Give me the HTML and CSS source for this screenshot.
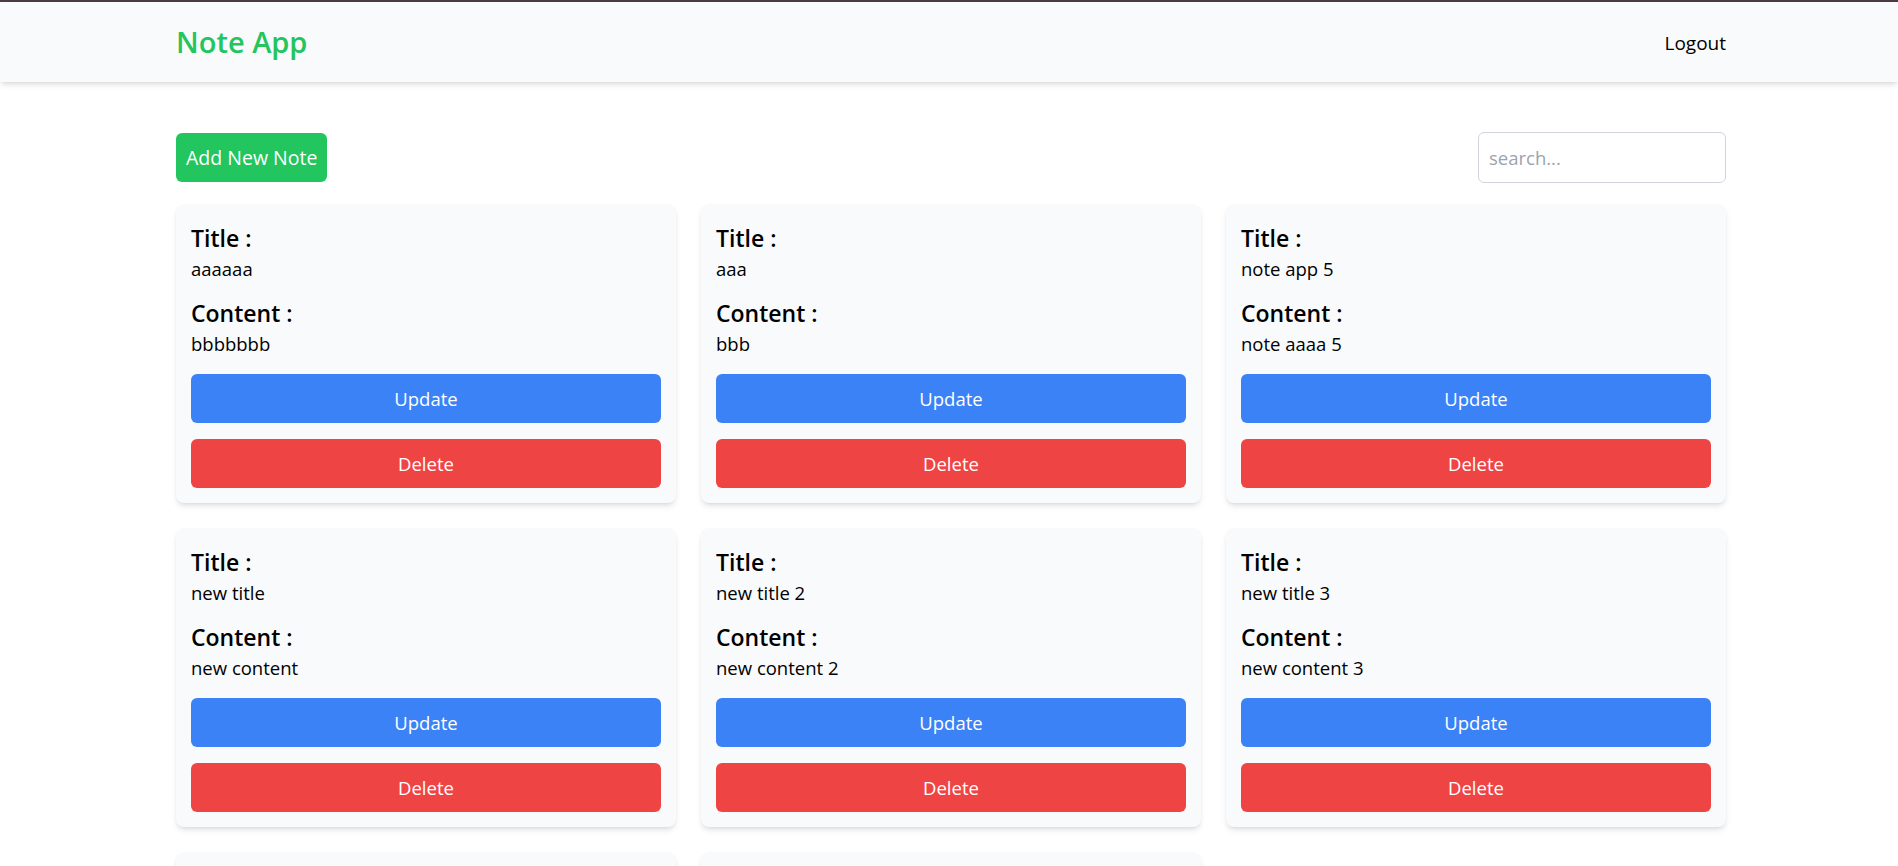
FILE: index.html
```html
<!DOCTYPE html>
<html lang="en">
<head>
<meta charset="utf-8">
<title>Note App</title>
<link rel="stylesheet" href="styles.css">
</head>
<body>
<div class="topline"></div>
<header class="navbar">
  <div class="container nav-inner">
    <div class="brand">Note App</div>
    <a class="logout" href="#">Logout</a>
  </div>
</header>
<main class="container main">
  <div class="toolbar">
    <button class="btn btn-add">Add New Note</button>
    <input class="search" type="text" placeholder="search...">
  </div>
  <div class="grid">
    <div class="card">
      <h3 class="label">Title :</h3>
      <p class="value">aaaaaa</p>
      <h3 class="label label-gap">Content :</h3>
      <p class="value">bbbbbbb</p>
      <div class="actions">
        <button class="btn btn-update">Update</button>
        <button class="btn btn-delete">Delete</button>
      </div>
    </div>
    <div class="card">
      <h3 class="label">Title :</h3>
      <p class="value">aaa</p>
      <h3 class="label label-gap">Content :</h3>
      <p class="value">bbb</p>
      <div class="actions">
        <button class="btn btn-update">Update</button>
        <button class="btn btn-delete">Delete</button>
      </div>
    </div>
    <div class="card">
      <h3 class="label">Title :</h3>
      <p class="value">note app 5</p>
      <h3 class="label label-gap">Content :</h3>
      <p class="value">note aaaa 5</p>
      <div class="actions">
        <button class="btn btn-update">Update</button>
        <button class="btn btn-delete">Delete</button>
      </div>
    </div>
    <div class="card">
      <h3 class="label">Title :</h3>
      <p class="value">new title</p>
      <h3 class="label label-gap">Content :</h3>
      <p class="value">new content</p>
      <div class="actions">
        <button class="btn btn-update">Update</button>
        <button class="btn btn-delete">Delete</button>
      </div>
    </div>
    <div class="card">
      <h3 class="label">Title :</h3>
      <p class="value">new title 2</p>
      <h3 class="label label-gap">Content :</h3>
      <p class="value">new content 2</p>
      <div class="actions">
        <button class="btn btn-update">Update</button>
        <button class="btn btn-delete">Delete</button>
      </div>
    </div>
    <div class="card">
      <h3 class="label">Title :</h3>
      <p class="value">new title 3</p>
      <h3 class="label label-gap">Content :</h3>
      <p class="value">new content 3</p>
      <div class="actions">
        <button class="btn btn-update">Update</button>
        <button class="btn btn-delete">Delete</button>
      </div>
    </div>
    <div class="card">
      <h3 class="label">Title :</h3>
      <p class="value">new title 4</p>
      <h3 class="label label-gap">Content :</h3>
      <p class="value">new content 4</p>
      <div class="actions">
        <button class="btn btn-update">Update</button>
        <button class="btn btn-delete">Delete</button>
      </div>
    </div>
    <div class="card">
      <h3 class="label">Title :</h3>
      <p class="value">new title 5</p>
      <h3 class="label label-gap">Content :</h3>
      <p class="value">new content 5</p>
      <div class="actions">
        <button class="btn btn-update">Update</button>
        <button class="btn btn-delete">Delete</button>
      </div>
    </div>
  </div>
</main>
</body>
</html>
```
FILE: styles.css
```css
* {
  box-sizing: border-box;
}

html, body {
  margin: 0;
  padding: 0;
  background: #ffffff;
  font-family: "Open Sans", "Noto Sans", sans-serif;
  color: #000000;
}

body {
  padding-left: 4px;
}

.topline {
  height: 2px;
  background: #4b3a45;
  margin-left: -4px;
}

.container {
  width: 1550px;
  margin: 0 auto;
}

.navbar {
  background: #f9fafb;
  height: 80px;
  margin-left: -4px;
  padding-left: 4px;
  box-shadow: 0 4px 6px -1px rgba(0, 0, 0, 0.1), 0 2px 4px -2px rgba(0, 0, 0, 0.1);
  position: relative;
  z-index: 1;
}

.nav-inner {
  height: 100%;
  display: flex;
  align-items: center;
  justify-content: space-between;
}

.brand {
  color: #22c55e;
  font-size: 29px;
  font-weight: 600;
  line-height: 38px;
}

.logout {
  color: #000000;
  text-decoration: none;
  font-size: 19px;
  line-height: 28px;
  margin-top: 2px;
}

.main {
  padding-top: 50px;
  padding-bottom: 40px;
}

.toolbar {
  display: flex;
  justify-content: space-between;
  align-items: center;
  height: 51px;
}

.btn {
  border: none;
  border-radius: 6px;
  color: #ffffff;
  font-family: "Open Sans", "Noto Sans", sans-serif;
  font-size: 18.5px;
  height: 49px;
  cursor: pointer;
  white-space: nowrap;
}

.btn-add {
  background: #22c55e;
  padding: 0 10px;
  font-size: 19.5px;
}

.search {
  width: 248px;
  height: 51px;
  border: 1px solid #d1d5db;
  border-radius: 6px;
  padding: 0 10px;
  font-family: "Open Sans", "Noto Sans", sans-serif;
  font-size: 18.5px;
  color: #111827;
  background: #ffffff;
  outline: none;
}

.search::placeholder {
  color: #9ca3af;
}

.grid {
  margin-top: 21px;
  display: grid;
  grid-template-columns: repeat(3, 1fr);
  column-gap: 25px;
  row-gap: 25px;
}

.card {
  background: #f9fafb;
  border-radius: 8px;
  padding: 17px 15px 15px;
  box-shadow: 0 4px 6px -1px rgba(0, 0, 0, 0.1), 0 2px 4px -2px rgba(0, 0, 0, 0.1);
}

.label {
  margin: 0;
  font-size: 23px;
  font-weight: 600;
  line-height: 34px;
}

.label-gap {
  margin-top: 13px;
}

.value {
  margin: 0;
  font-size: 18.5px;
  line-height: 28px;
}

.actions {
  margin-top: 16px;
  display: flex;
  flex-direction: column;
  gap: 16px;
}

.btn-update {
  background: #3b82f6;
  width: 100%;
}

.btn-delete {
  background: #ef4444;
  width: 100%;
}
```
